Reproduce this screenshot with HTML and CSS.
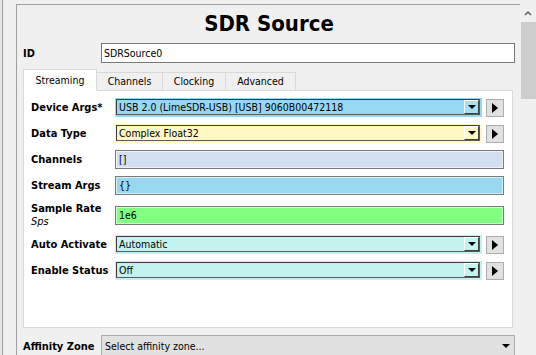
FILE: index.html
```html
<!DOCTYPE html>
<html lang="en">
  <head>
    <meta charset="UTF-8" />
    <title>SDR Source</title>
    <link rel="stylesheet" href="styles.css">
  </head>
  <body>
    <div class="window">
      <div class="view">
        <div class="frame">
          <h1 class="title">SDR Source</h1>

          <div class="id-row">
            <div class="label">ID</div>
            <div class="id-input">SDRSource0</div>
          </div>

          <div class="tabs">
            <div class="tabbar">
              <span class="tab active">Streaming</span>
              <span class="tab">Channels</span>
              <span class="tab">Clocking</span>
              <span class="tab">Advanced</span>
            </div>

            <div class="pane">
              <div class="form">
                <div class="label">Device Args*</div>
                <div class="field">
                  <div class="combo blue">
                    <div class="combo-box">
                      <span class="combo-text">USB 2.0 (LimeSDR-USB) [USB] 9060B00472118</span>
                      <span class="drop"></span>
                    </div>
                  </div>
                  <span class="step"></span>
                </div>

                <div class="label">Data Type</div>
                <div class="field">
                  <div class="combo yellow">
                    <div class="combo-box">
                      <span class="combo-text">Complex Float32</span>
                      <span class="drop"></span>
                    </div>
                  </div>
                  <span class="step"></span>
                </div>

                <div class="label">Channels</div>
                <div class="field">
                  <div class="edit steel">[]</div>
                </div>

                <div class="label">Stream Args</div>
                <div class="field">
                  <div class="edit blue">{}</div>
                </div>

                <div class="label stack">
                  <span>Sample Rate</span>
                  <span class="unit">Sps</span>
                </div>
                <div class="field">
                  <div class="edit green">1e6</div>
                </div>

                <div class="label">Auto Activate</div>
                <div class="field">
                  <div class="combo cyan">
                    <div class="combo-box">
                      <span class="combo-text">Automatic</span>
                      <span class="drop"></span>
                    </div>
                  </div>
                  <span class="step"></span>
                </div>

                <div class="label">Enable Status</div>
                <div class="field">
                  <div class="combo cyan">
                    <div class="combo-box">
                      <span class="combo-text">Off</span>
                      <span class="drop"></span>
                    </div>
                  </div>
                  <span class="step"></span>
                </div>
              </div>
            </div>
          </div>

          <div class="affinity-row">
            <div class="label">Affinity Zone</div>
            <div class="affinity">
              <span>Select affinity zone...</span>
              <span class="affinity-arrow"></span>
            </div>
          </div>
        </div>
      </div>

      <div class="scrollbar">
        <svg class="up" width="16" height="22" viewBox="0 0 16 22">
          <polyline points="5,15 8,12 11,15" fill="none" stroke="#606060" stroke-width="1.5" />
        </svg>
        <div class="thumb"></div>
      </div>
    </div>
  </body>
</html>
```

FILE: styles.css
```css
body {
  margin: 0;
  background: #e6e6e6;
  font-family: "DejaVu Sans Condensed", "DejaVu Sans", sans-serif;
  font-size: 10.5px;
  color: #000;
  overflow: hidden;
}

.window {
  display: flex;
  height: 355px;
  padding-left: 2px;
}

.view {
  flex: 1;
  display: flex;
  background: #f0f0f0;
  border-left: 1px solid #a0a0a0;
  padding: 4px 0 0 13px;
}

.frame {
  flex: 1;
  border-left: 1px solid #a0a0a0;
  border-top: 1px solid #a0a0a0;
  padding: 0 5px 0 6px;
}

.title {
  margin: 0;
  height: 38px;
  line-height: 38px;
  text-align: center;
  font-size: 22px;
  font-weight: bold;
}

.label {
  font-size: 11px;
  font-weight: bold;
  white-space: nowrap;
}

.id-row {
  display: grid;
  grid-template-columns: 78px 1fr;
  align-items: center;
  height: 20px;
}

.id-input {
  height: 18px;
  line-height: 18px;
  border: 1px solid #7a7a7a;
  background: #fff;
  padding-left: 2px;
}

.tabs {
  margin: 7px 2px 0 0;
}

.tabbar {
  display: flex;
  align-items: flex-end;
  height: 20px;
  border-bottom: 1px solid #d9d9d9;
}

.tab {
  height: 17px;
  line-height: 17px;
  text-align: center;
  margin-bottom: -1px;
  border: 1px solid #d9d9d9;
  border-left: none;
  background: #f0f0f0;
}

.tab:nth-child(1) {
  width: 72px;
}

.tab:nth-child(2) {
  width: 65px;
}

.tab:nth-child(3) {
  width: 62px;
}

.tab:nth-child(4) {
  width: 69px;
}

.tab.active {
  height: 20px;
  line-height: 20px;
  border-left: 1px solid #d9d9d9;
  border-bottom-color: #fff;
  background: #fff;
}

.pane {
  height: 229px;
  background: #fff;
  border: 1px solid #d9d9d9;
  border-top: none;
  padding: 7px 8px 0 7px;
}

.form {
  display: grid;
  grid-template-columns: 80px 1fr;
  column-gap: 4px;
  row-gap: 7px;
  align-items: center;
}

.field {
  display: flex;
  align-items: center;
  gap: 4px;
  height: 19px;
}

.label.stack {
  display: flex;
  flex-direction: column;
  line-height: 13px;
}

.unit {
  font-weight: normal;
  font-style: italic;
}

.combo {
  flex: 1;
  height: 19px;
  padding: 1px 2px 2px 1px;
  box-sizing: border-box;
}

.combo-box {
  display: flex;
  align-items: center;
  height: 100%;
  box-sizing: border-box;
  border: 1px solid #5a5a5a;
  border-color: #3c3c3c #5a5a5a #5a5a5a #3c3c3c;
}

.combo-text {
  flex: 1;
  padding-left: 2px;
  white-space: nowrap;
  overflow: hidden;
}

.drop {
  width: 15px;
  height: 14px;
  box-sizing: border-box;
  border: 1px solid;
  border-color: #fff #404040 #404040 #fff;
  display: flex;
  align-items: center;
  justify-content: center;
}

.drop::after {
  content: "";
  border-top: 4px solid #000;
  border-left: 4px solid transparent;
  border-right: 4px solid transparent;
}

.step {
  width: 18px;
  height: 18px;
  box-sizing: border-box;
  background: #e1e1e1;
  border: 1px solid #adadad;
  display: flex;
  align-items: center;
  justify-content: center;
}

.step::after {
  content: "";
  border-left: 6px solid #000;
  border-top: 5.5px solid transparent;
  border-bottom: 5.5px solid transparent;
}

.edit {
  flex: 1;
  height: 19px;
  line-height: 17px;
  box-sizing: border-box;
  border: 1px solid #7a7a7a;
  box-shadow: inset 0 0 0 1px rgba(255, 255, 255, 0.6);
  padding-left: 3px;
}

.blue {
  background: #98d8ef;
}

.blue .drop {
  background: #a6e0f3;
}

.yellow,
.yellow .drop {
  background: #fff7c4;
}

.cyan,
.cyan .drop {
  background: #c3f3ef;
}

.steel {
  background: #d2dff0;
}

.green {
  background: #80ff80;
}

.affinity-row {
  display: grid;
  grid-template-columns: 78px 1fr;
  align-items: center;
  margin-top: 7px;
}

.affinity {
  display: flex;
  align-items: center;
  justify-content: space-between;
  height: 22px;
  box-sizing: border-box;
  border: 1px solid #adadad;
  background: #e1e1e1;
  padding: 0 4px 0 3px;
}

.affinity-arrow {
  border-top: 4px solid #000;
  border-left: 4px solid transparent;
  border-right: 4px solid transparent;
}

.scrollbar {
  width: 16px;
  background: #f0f0f0;
  display: flex;
  flex-direction: column;
  align-items: flex-end;
}

.up {
  display: block;
  height: 22px;
}

.thumb {
  width: 15px;
  height: 77px;
  background: #cdcdcd;
}
```
